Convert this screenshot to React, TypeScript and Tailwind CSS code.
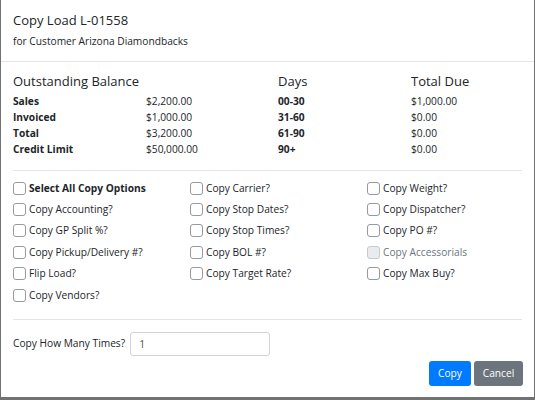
import { useState } from "react";

const balance = [
  { label: "Sales", value: "$2,200.00", days: "00-30", due: "$1,000.00" },
  { label: "Invoiced", value: "$1,000.00", days: "31-60", due: "$0.00" },
  { label: "Total", value: "$3,200.00", days: "61-90", due: "$0.00" },
  { label: "Credit Limit", value: "$50,000.00", days: "90+", due: "$0.00" },
];

// laid out row by row across three columns
const options = [
  { label: "Select All Copy Options", bold: true },
  { label: "Copy Carrier?" },
  { label: "Copy Weight?" },
  { label: "Copy Accounting?" },
  { label: "Copy Stop Dates?" },
  { label: "Copy Dispatcher?" },
  { label: "Copy GP Split %?" },
  { label: "Copy Stop Times?" },
  { label: "Copy PO #?" },
  { label: "Copy Pickup/Delivery #?" },
  { label: "Copy BOL #?" },
  { label: "Copy Accessorials", disabled: true },
  { label: "Flip Load?" },
  { label: "Copy Target Rate?" },
  { label: "Copy Max Buy?" },
  { label: "Copy Vendors?" },
];

const CheckOption = ({ label, bold, disabled }: { label: string; bold?: boolean; disabled?: boolean }) => (
  <label className="flex items-center h-[21.4px] gap-[3px] cursor-pointer">
    <span
      className={`w-[13px] h-[13px] rounded-[3px] border ${
        disabled ? "border-[#c6cacf] bg-[#e9ecef]" : "border-[#959a9f] bg-white"
      }`}
    />
    <span className={`${bold ? "font-bold" : ""} ${disabled ? "text-[#6c757d]" : "text-[#212529]"}`}>{label}</span>
  </label>
);

const App = () => {
  const [times, setTimes] = useState("1");

  return (
    <div
      className="w-[535px] h-[400px] bg-[#707274] overflow-hidden"
      style={{ fontFamily: '"Open Sans", "Noto Sans", sans-serif' }}
    >
      <div className="w-[533px] h-[397px] ml-px bg-white flex flex-col text-[10.2px] text-[#212529]">
        {/* Header */}
        <div className="h-[62px] px-3 pt-[11px] border-b border-[#e3e6e9]">
          <div className="text-[13px] leading-[18px]">Copy Load L-01558</div>
          <div className="mt-[4px] leading-[16px]">for Customer Arizona Diamondbacks</div>
        </div>

        {/* Body */}
        <div className="px-3 pt-[9px]">
          <div className="grid grid-cols-[133px_132px_133px_1fr]">
            <div className="text-[13px] leading-[20px] mb-[2px] col-span-2">Outstanding Balance</div>
            <div className="text-[13px] leading-[20px] mb-[2px]">Days</div>
            <div className="text-[13px] leading-[20px] mb-[2px]">Total Due</div>
            {balance.map((row) => (
              <div key={row.label} className="contents leading-[16px]">
                <div className="font-bold">{row.label}</div>
                <div>{row.value}</div>
                <div className="font-bold">{row.days}</div>
                <div>{row.due}</div>
              </div>
            ))}
          </div>

          <hr className="mt-[13px] border-[#e3e6e9]" />

          <div className="grid grid-cols-[177px_177px_1fr] pt-[6.5px]">
            {options.map((o) => (
              <CheckOption key={o.label} {...o} />
            ))}
          </div>

          <hr className="mt-[13px] border-[#e3e6e9]" />

          <div className="flex items-center mt-[12px] gap-[5px]">
            <span>Copy How Many Times?</span>
            <input
              value={times}
              onChange={(e) => setTimes(e.target.value)}
              className="w-[140px] h-[24px] px-[8px] border border-[#ced4da] rounded-[3px] outline-none text-[#495057]"
            />
          </div>
        </div>

        {/* Footer */}
        <div className="flex justify-end gap-[3px] pr-[11px] mt-[5px]">
          <button className="w-[42px] h-[25px] rounded-[3px] bg-[#007bff] text-white">Copy</button>
          <button className="w-[49px] h-[25px] rounded-[3px] bg-[#6c757d] text-white">Cancel</button>
        </div>
      </div>
    </div>
  );
};

export default App;
